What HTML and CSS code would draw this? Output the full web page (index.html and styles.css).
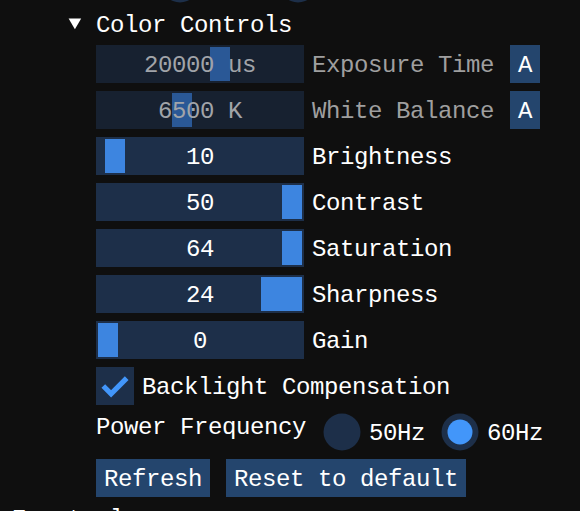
FILE: index.html
```html
<!DOCTYPE html>
<html>
<head>
<meta charset="utf-8">
<link rel="stylesheet" href="styles.css">
</head>
<body>
<div class="win">
  <div class="row prev">
    <span class="radio"><svg width="38" height="38" viewBox="0 0 38 38"><circle cx="19" cy="19" r="18.5" fill="#1d2f49"/></svg></span>
    <span class="spacer"></span>
    <span class="radio gap16"><svg width="38" height="38" viewBox="0 0 38 38"><circle cx="19" cy="19" r="18.5" fill="#1d2f49"/></svg></span>
  </div>

  <div class="tree">
    <span class="arrow"><svg width="26" height="26" viewBox="0 0 26 26"><polygon points="6.6,7.4 19.2,7.4 12.9,18.3" fill="#ffffff"/></svg></span>
    <span class="ttext">Color Controls</span>
  </div>

  <div class="content">
    <div class="row">
      <div class="frame dis"><span class="grab dis" style="left:114px;width:20px"></span><span class="val">20000 us</span></div>
      <span class="label dis">Exposure Time</span>
      <span class="btn small">A</span>
    </div>
    <div class="row">
      <div class="frame dis"><span class="grab dis" style="left:76px;width:20px"></span><span class="val">6500 K</span></div>
      <span class="label dis">White Balance</span>
      <span class="btn small">A</span>
    </div>
    <div class="row">
      <div class="frame"><span class="grab" style="left:9px;width:20px"></span><span class="val">10</span></div>
      <span class="label">Brightness</span>
    </div>
    <div class="row">
      <div class="frame"><span class="grab" style="left:186px;width:20px"></span><span class="val">50</span></div>
      <span class="label">Contrast</span>
    </div>
    <div class="row">
      <div class="frame"><span class="grab" style="left:186px;width:20px"></span><span class="val">64</span></div>
      <span class="label">Saturation</span>
    </div>
    <div class="row">
      <div class="frame"><span class="grab" style="left:165px;width:41px"></span><span class="val">24</span></div>
      <span class="label">Sharpness</span>
    </div>
    <div class="row">
      <div class="frame"><span class="grab" style="left:2px;width:20px"></span><span class="val">0</span></div>
      <span class="label">Gain</span>
    </div>
    <div class="row">
      <span class="check"><svg width="38" height="38" viewBox="0 0 38 38"><polyline points="7.3,19 15.1,26.8 30.7,11.2" fill="none" stroke="#4296fa" stroke-width="5.2"/></svg></span>
      <span class="label">Backlight Compensation</span>
    </div>
    <div class="row">
      <span class="plain pf">Power Frequency</span>
      <span class="radio"><svg width="38" height="38" viewBox="0 0 38 38"><circle cx="19" cy="19" r="18.5" fill="#1d2f49"/></svg></span>
      <span class="rlabel">50Hz</span>
      <span class="radio gap16"><svg width="38" height="38" viewBox="0 0 38 38"><circle cx="19" cy="19" r="18.5" fill="#1d2f49"/><circle cx="19" cy="19" r="12.5" fill="#4296fa"/></svg></span>
      <span class="rlabel">60Hz</span>
    </div>
    <div class="row">
      <span class="btn">Refresh</span>
      <span class="btn gap16">Reset to default</span>
    </div>
  </div>

  <div class="plain next">Events log</div>
</div>
</body>
</html>
```

FILE: styles.css
```css
html, body {
  margin: 0;
  padding: 0;
  background: #0f0f0f;
  width: 580px;
  height: 511px;
  overflow: hidden;
}

body {
  font-family: "Liberation Mono", "DejaVu Sans Mono", monospace;
  font-size: 24px;
  letter-spacing: -0.4px;
  color: #ffffff;
  white-space: nowrap;
}

.win {
  display: flex;
  flex-direction: column;
  gap: 8px;
  margin-top: -35px;
}

.content {
  display: flex;
  flex-direction: column;
  gap: 8px;
  padding-left: 96px;
}

.row {
  display: flex;
  align-items: flex-start;
  height: 38px;
}

.prev {
  padding-left: 161px;
}

.spacer {
  display: block;
  width: 64px;
  height: 38px;
}

.tree {
  display: flex;
  height: 26px;
  padding-left: 62px;
}

.arrow {
  display: block;
  width: 26px;
  height: 26px;
  margin-right: 8px;
}

.arrow svg, .radio svg, .check svg {
  display: block;
}

.ttext, .plain {
  display: block;
  height: 26px;
  line-height: 29px;
}

.frame {
  position: relative;
  box-sizing: border-box;
  width: 208px;
  height: 38px;
  padding-top: 6px;
  line-height: 29px;
  text-align: center;
  background: #1d2f49;
}

.frame.dis {
  background: #172130;
  color: #a1a4a9;
}

.grab {
  position: absolute;
  top: 2px;
  bottom: 2px;
  background: #3d85e0;
}

.grab.dis {
  background: #2a5896;
}

.val {
  position: relative;
  display: block;
}

.label {
  display: block;
  box-sizing: border-box;
  height: 38px;
  padding-top: 6px;
  line-height: 29px;
  margin-left: 8px;
}

.label.dis {
  color: #9f9f9f;
}

.btn {
  display: block;
  box-sizing: border-box;
  height: 38px;
  padding: 6px 8px 0;
  line-height: 29px;
  background: #24456d;
}

.btn.small {
  margin-left: 16px;
}

.gap16 {
  margin-left: 16px;
}

.check {
  display: block;
  width: 38px;
  height: 38px;
  background: #1d2f49;
}

.radio {
  display: block;
  width: 38px;
  height: 38px;
}

.rlabel {
  display: block;
  box-sizing: border-box;
  height: 38px;
  padding-top: 6px;
  line-height: 29px;
  margin-left: 8px;
}

.pf {
  margin-right: 17px;
}

.next {
  margin-left: 12px;
}
```
